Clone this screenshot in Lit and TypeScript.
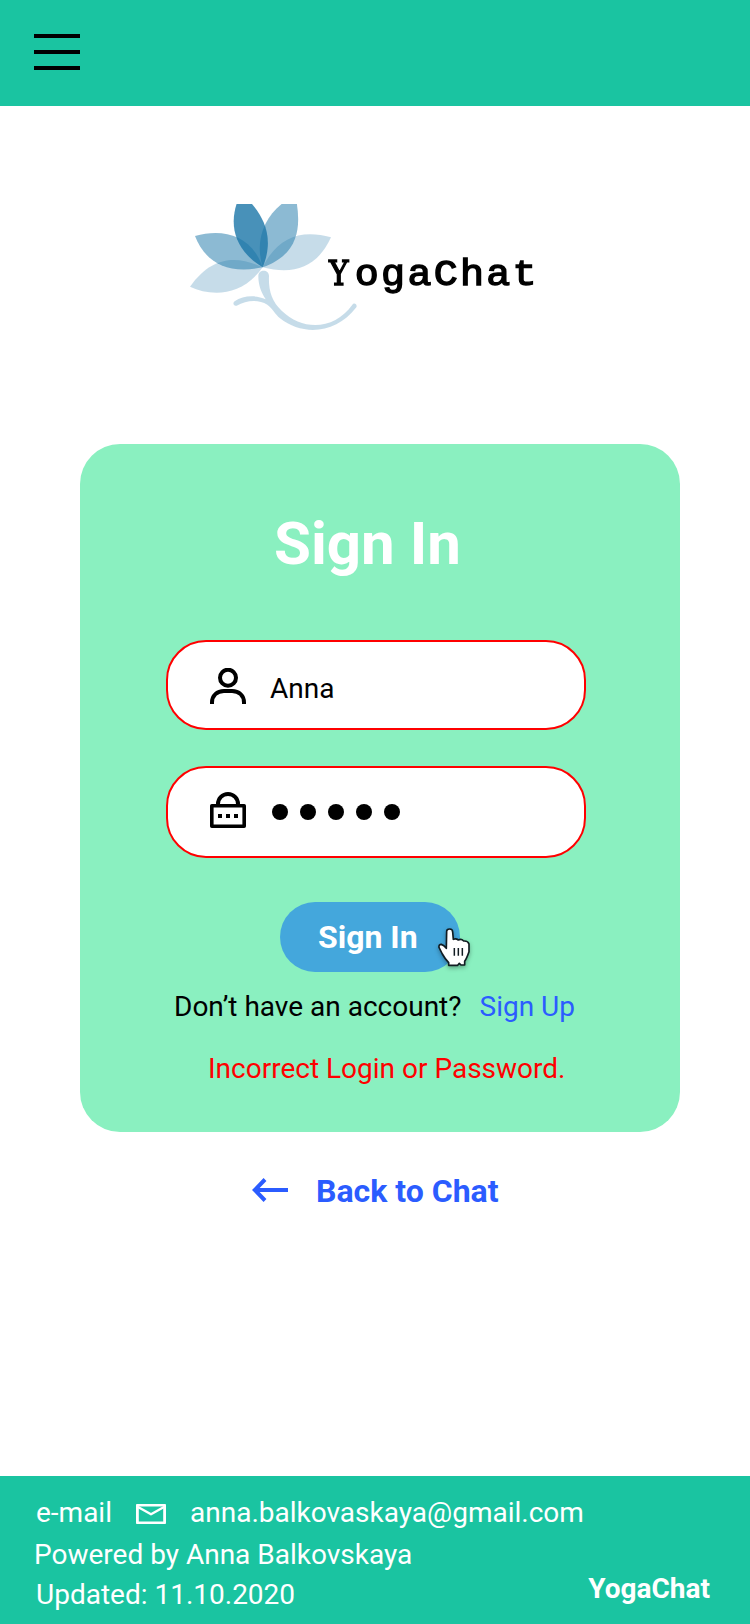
import { LitElement, html, css } from "lit";
import { customElement, property } from "lit/decorators.js";

@customElement("yoga-logo")
class YogaLogo extends LitElement {
  static styles = css`
    :host { display: flex; width: 370px; height: 150px; }
    .lotus { flex: none; width: 190px; height: 150px; overflow: hidden; }
    .word {
      margin: 61px 0 0 -41px; height: 48px; white-space: nowrap;
      font: 400 40px/48px "Liberation Mono", monospace; letter-spacing: 2.3px; color: #000;
      -webkit-text-stroke: 1.5px #000; transform: scaleY(0.93); transform-origin: 0 36px;
    }
    .slab {
      display: inline-block; width: 25.8px; letter-spacing: 0;
      font-family: "DejaVu Serif", serif; font-size: 36px; line-height: 40px;
    }
    .slab i { display: inline-block; font-style: normal; transform: scaleX(0.82); transform-origin: 0 50%; }
  `;
  render() {
    return html`
      <svg class="lotus" viewBox="0 0 570 450">
        <defs><clipPath id="top"><rect x="0" y="42" width="570" height="408" /></clipPath></defs>
        <g fill="#1a75a7" clip-path="url(#top)">
          <path opacity=".25" d="M248 232C180 200 100 190 30 290C95 320 185 320 248 232Z" />
          <path opacity=".25" d="M453 142C360 115 290 145 248 232C340 255 410 235 453 142Z" />
          <path opacity=".5" d="M45 138C130 115 215 135 248 232C140 255 75 215 45 138Z" />
          <path opacity=".5" d="M346 15C260 60 220 140 248 232C365 190 363 100 346 15Z" />
          <path opacity=".8" d="M183 10C147 80 147 170 248 232C295 120 225 45 183 10Z" />
          <path opacity=".25" d="M235 258C235 237 267 237 267 258C265 300 275 335 305 362C370 425 465 418 517 344C523 336 533 345 529 352C470 430 370 440 300 385C285 372 280 358 262 344C235 328 200 330 170 347C162 350 156 340 164 334C190 315 230 315 257 328C243 305 235 285 235 258Z" />
        </g>
      </svg>
      <div class="word"><span class="slab"><i>Y</i></span>ogaChat</div>
    `;
  }
}

@customElement("login-field")
class LoginField extends LitElement {
  @property() kind = "user";
  static styles = css`
    :host {
      display: flex; align-items: flex-start; box-sizing: border-box; width: 420px;
      border: 2px solid #f00; border-radius: 40px; background: #fff;
    }
    .icon { flex: none; width: 36px; height: 36px; margin-left: 42px; }
    .user { margin-top: 26px; }
    .lock { margin-top: 24px; }
    .value { margin: 31px 0 0 24px; font-size: 28px; line-height: 32px; color: #000; }
    .dots { display: flex; gap: 12px; margin: 36px 0 0 26px; }
    .dot { width: 16px; height: 16px; border-radius: 50%; background: #000; }
  `;
  render() {
    return this.kind === "user"
      ? html`
          <svg class="icon user" viewBox="0 0 36 36" fill="none" stroke="#000" stroke-width="4">
            <circle cx="18" cy="9.7" r="8" />
            <path d="M2 36V34.5C2 27.5 7 23 14 23H22C29 23 34 27.5 34 34.5V36" />
          </svg>
          <span class="value">Anna</span>`
      : html`
          <svg class="icon lock" viewBox="0 0 36 36" fill="none" stroke="#000">
            <rect x="1.8" y="13.8" width="32.4" height="20.4" stroke-width="3.6" stroke-linejoin="round" />
            <path d="M8 13V12A10 10 0 0 1 28 12V13" stroke-width="4" />
            <path d="M8 24H12M16 24H20M24 24H28" stroke-width="4" />
          </svg>
          <div class="dots">${[0, 1, 2, 3, 4].map(() => html`<span class="dot"></span>`)}</div>`;
  }
}

@customElement("app-root")
class AppRoot extends LitElement {
  static styles = css`
    :host {
      display: flex; flex-direction: column; width: 750px; height: 1624px;
      background: #fff; font-family: Roboto, sans-serif; font-size: 28px; line-height: 32px; color: #000;
    }
    .header { height: 106px; background: #1ac4a1; box-sizing: border-box; padding: 34px; flex: none; }
    .burger { display: flex; flex-direction: column; gap: 12px; width: 46px; }
    .bar { height: 4px; background: #000; }
    .main { flex: 1; display: flex; flex-direction: column; }
    .logo { margin: 84px 0 0 180px; }
    .card {
      margin: 104px 0 0 80px; width: 600px; height: 688px; box-sizing: border-box; padding: 65px 0 0 86px;
      background: #8af0c0; border-radius: 40px; display: flex; flex-direction: column; align-items: flex-start;
    }
    .title { margin: 0 0 0 108px; font-size: 60px; line-height: 70px; font-weight: 700; color: #fff; }
    .name { height: 90px; margin-top: 61px; }
    .pass { height: 92px; margin-top: 36px; }
    .button {
      position: relative; width: 180px; height: 70px; margin: 44px 0 0 114px; border-radius: 35px;
      background: #44a7dc; color: #fff; font-weight: 700; font-size: 32px; line-height: 38px;
      box-sizing: border-box; padding: 16px 0 0 38px;
    }
    .pointer { position: absolute; left: 156px; top: 24px; width: 40px; height: 46px; filter: drop-shadow(0 2px 2px rgba(0, 0, 0, 0.3)); }
    .signup { display: flex; margin: 19px 0 0 8px; white-space: nowrap; }
    .link { color: #2b5cff; margin-left: 18px; }
    .error { margin: 30px 0 0 42px; color: #f00; white-space: nowrap; }
    .back {
      display: flex; align-items: flex-start; margin: 40px 0 0 252px; gap: 27px;
      color: #2b5cff; font-weight: 700; font-size: 32px; line-height: 38px;
    }
    .arrow { width: 37px; height: 24px; margin-top: 6px; }
    .footer {
      flex: none; height: 148px; background: #1ac4a1; color: #fff; box-sizing: border-box;
      padding: 21px 40px 0 34px; display: flex; justify-content: space-between;
    }
    .mail { display: flex; padding-left: 2px; }
    .envelope { width: 30px; height: 20px; margin: 7px 24px 0 24px; }
    .powered { margin-top: 10px; }
    .updated { margin: 8px 0 0 2px; }
    .brand { font-weight: 700; margin-top: 76px; }
  `;
  render() {
    return html`
      <header class="header">
        <div class="burger"><span class="bar"></span><span class="bar"></span><span class="bar"></span></div>
      </header>
      <main class="main">
        <yoga-logo class="logo"></yoga-logo>
        <section class="card">
          <h1 class="title">Sign In</h1>
          <login-field class="name" kind="user"></login-field>
          <login-field class="pass" kind="password"></login-field>
          <div class="button">
            Sign In
            <svg class="pointer" viewBox="498 108 120 138">
              <path fill="#fff" stroke="#111c22" stroke-width="5" stroke-linejoin="round"
                d="M530 124Q530 117 539 117Q548 117 548 126L550 148Q558 144 565 150Q574 145 581 153Q594 152 597 162L597 185Q590 205 584 214L584 225L573 225L568 220L563 226L536 226L536 218Q524 205 517 192L507 172Q506 163 514 163Q522 165 529 175Z" />
              <path stroke="#111c22" stroke-width="4.5" d="M553 174V197M565 174V197M577 174V197" />
            </svg>
          </div>
          <div class="signup"><span>Don’t have an account?</span><span class="link">Sign Up</span></div>
          <div class="error">Incorrect Login or Password.</div>
        </section>
        <div class="back">
          <svg class="arrow" viewBox="0 0 37 24" fill="none" stroke="#2b5cff" stroke-width="4">
            <path d="M13 1.5L2.8 12L13 22.5M3 12H36" />
          </svg>
          <span>Back to Chat</span>
        </div>
      </main>
      <footer class="footer">
        <div>
          <div class="mail">
            <span>e-mail</span>
            <svg class="envelope" viewBox="0 0 30 20" fill="none" stroke="#fff" stroke-linejoin="round">
              <rect x="1.4" y="1.2" width="27.2" height="17.6" stroke-width="2.8" />
              <path d="M2 3L15 10.3L28 3" stroke-width="2.4" />
            </svg>
            <span>anna.balkovaskaya@gmail.com</span>
          </div>
          <div class="powered">Powered by Anna Balkovskaya</div>
          <div class="updated">Updated: 11.10.2020</div>
        </div>
        <div class="brand">YogaChat</div>
      </footer>
    `;
  }
}
